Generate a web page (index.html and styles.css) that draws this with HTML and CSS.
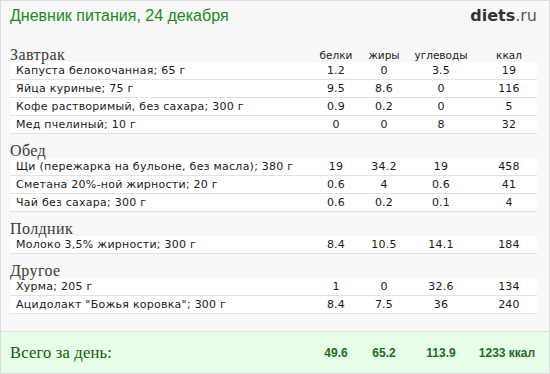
FILE: index.html
```html
<!DOCTYPE html>
<html lang="ru">
<head>
<meta charset="utf-8">
<title>Дневник питания</title>
<link rel="stylesheet" href="styles.css">
</head>
<body>
<div class="page">
  <div class="content">
    <header class="top">
      <h1 class="title">Дневник питания, 24 декабря</h1>
      <div class="logo"><b>diets</b>.ru</div>
    </header>

    <div class="head-row">
      <div class="meal">Завтрак</div>
      <div class="c">белки</div>
      <div class="c">жиры</div>
      <div class="c">углеводы</div>
      <div class="c k">ккал</div>
    </div>
    <div class="row"><div class="name">Капуста белокочанная; 65 г</div><div class="c">1.2</div><div class="c">0</div><div class="c">3.5</div><div class="c k">19</div></div>
    <div class="row"><div class="name">Яйца куриные; 75 г</div><div class="c">9.5</div><div class="c">8.6</div><div class="c">0</div><div class="c k">116</div></div>
    <div class="row"><div class="name">Кофе растворимый, без сахара; 300 г</div><div class="c">0.9</div><div class="c">0.2</div><div class="c">0</div><div class="c k">5</div></div>
    <div class="row"><div class="name">Мед пчелиный; 10 г</div><div class="c">0</div><div class="c">0</div><div class="c">8</div><div class="c k">32</div></div>

    <div class="head-row"><div class="meal">Обед</div></div>
    <div class="row"><div class="name">Щи (пережарка на бульоне, без масла); 380 г</div><div class="c">19</div><div class="c">34.2</div><div class="c">19</div><div class="c k">458</div></div>
    <div class="row"><div class="name">Сметана 20%-ной жирности; 20 г</div><div class="c">0.6</div><div class="c">4</div><div class="c">0.6</div><div class="c k">41</div></div>
    <div class="row"><div class="name">Чай без сахара; 300 г</div><div class="c">0.6</div><div class="c">0.2</div><div class="c">0.1</div><div class="c k">4</div></div>

    <div class="head-row"><div class="meal">Полдник</div></div>
    <div class="row"><div class="name">Молоко 3,5% жирности; 300 г</div><div class="c">8.4</div><div class="c">10.5</div><div class="c">14.1</div><div class="c k">184</div></div>

    <div class="head-row"><div class="meal">Другое</div></div>
    <div class="row"><div class="name">Хурма; 205 г</div><div class="c">1</div><div class="c">0</div><div class="c">32.6</div><div class="c k">134</div></div>
    <div class="row"><div class="name">Ацидолакт "Божья коровка"; 300 г</div><div class="c">8.4</div><div class="c">7.5</div><div class="c">36</div><div class="c k">240</div></div>
  </div>

  <footer class="total">
    <div class="total-label">Всего за день:</div>
    <div class="c">49.6</div>
    <div class="c">65.2</div>
    <div class="c">113.9</div>
    <div class="c k">1233 ккал</div>
  </footer>
</div>
</body>
</html>
```
FILE: styles.css
```css
* { box-sizing: border-box; }
html, body { margin: 0; padding: 0; }
body { background: #ffffff; }

.page {
  width: 550px;
  height: 374px;
  border: 1px solid #dcdcdc;
  background: #f8f8f8;
  display: flex;
  flex-direction: column;
}

.content {
  padding: 0 12px 0 9px;
  flex: 1;
}

.top {
  height: 37px;
  display: flex;
  justify-content: space-between;
  align-items: flex-start;
  padding-top: 6px;
}

.title {
  margin: 0;
  font-family: "Liberation Sans", Arial, sans-serif;
  font-weight: normal;
  font-size: 16px;
  line-height: 18px;
  color: #1a8a1a;
}

.logo {
  font-family: "DejaVu Sans", sans-serif;
  font-size: 16px;
  line-height: 18px;
  color: #555;
}
.logo b { font-weight: 700; color: #333; }

.head-row,
.row,
.total {
  display: grid;
  grid-template-columns: 1fr 48px 48px 66px 63px;
  align-items: center;
}

.head-row {
  height: 24px;
  padding-top: 8px;
  font-family: "DejaVu Sans", Verdana, sans-serif;
  font-size: 10.5px;
  color: #222;
}

.meal {
  font-family: "Liberation Serif", "Times New Roman", serif;
  font-size: 16px;
  letter-spacing: 0.4px;
  color: #3a3a3a;
}

.row {
  height: 18px;
  background: #fff;
  border-bottom: 1px solid #e2e2e2;
  font-family: "DejaVu Sans", Verdana, sans-serif;
  font-size: 11px;
  letter-spacing: 0.25px;
  color: #1a1a1a;
}

.name { padding-left: 6px; white-space: nowrap; }

.c { text-align: center; }
.k { padding-left: 7px; }

.total {
  height: 42px;
  border-top: 1px solid #dcdcdc;
  background: #e8fde8;
  padding: 0 12px 0 9px;
  font-family: "Liberation Sans", Arial, sans-serif;
  font-weight: bold;
  font-size: 12px;
  color: #1d6b1d;
}
.total .k { padding-left: 3px; }

.total-label {
  font-family: "Liberation Serif", "Times New Roman", serif;
  font-weight: normal;
  font-size: 16.5px;
  letter-spacing: 0.2px;
  color: #0d5c0d;
}
```
